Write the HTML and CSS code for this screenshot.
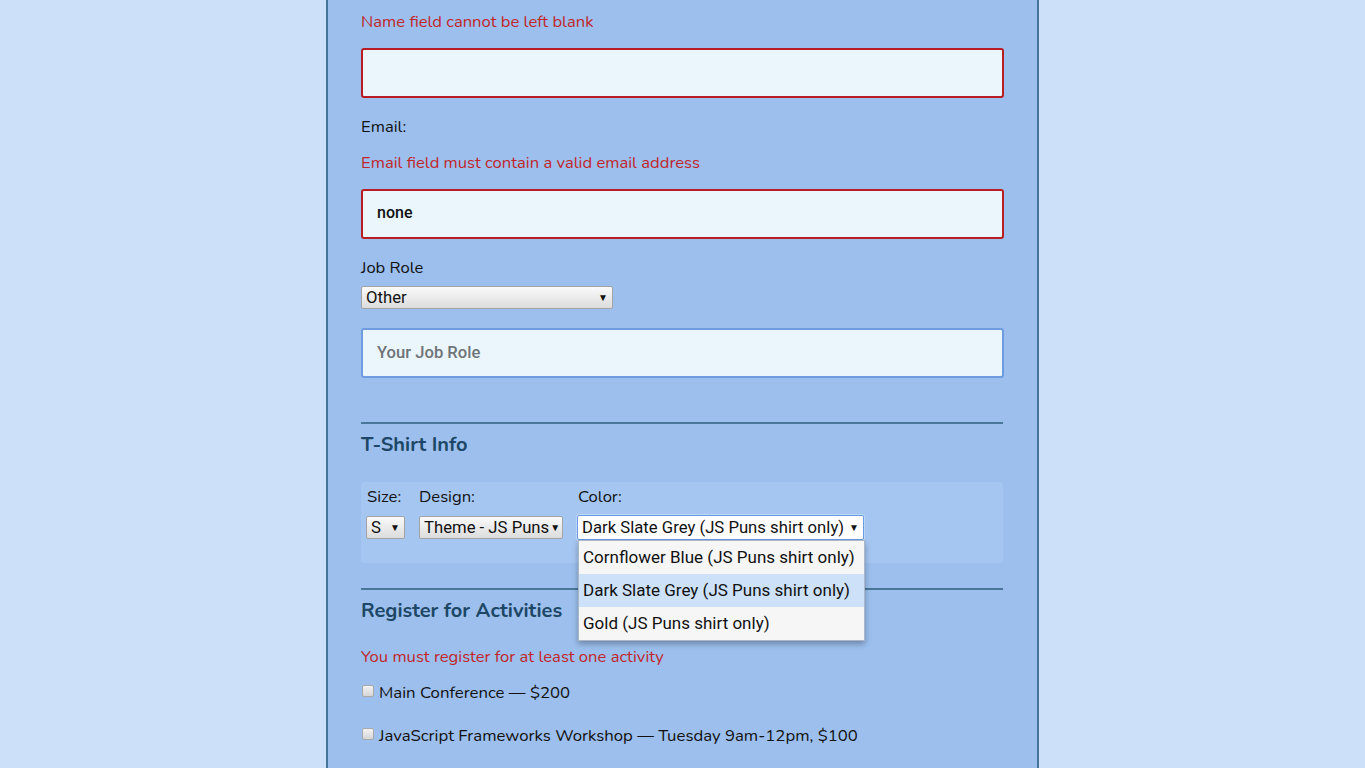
FILE: index.html
```html
<!DOCTYPE html>
<html>
<head>
<meta charset="utf-8">
<link rel="stylesheet" href="styles.css">
</head>
<body>
<div class="page">
  <form class="container">
    <p class="error first">Name field cannot be left blank</p>
    <div class="input invalid"></div>
    <p class="label">Email:</p>
    <p class="error">Email field must contain a valid email address</p>
    <div class="input invalid filled">none</div>
    <p class="label job">Job Role</p>
    <div class="select job-select"><span>Other</span><span class="arrow">▼</span></div>
    <div class="input other placeholder">Your Job Role</div>

    <hr class="rule first-rule">
    <h2 class="legend">T-Shirt Info</h2>
    <div class="shirt">
      <div class="col size-col">
        <span class="small-label">Size:</span>
        <div class="select size-select"><span>S</span><span class="arrow">▼</span></div>
      </div>
      <div class="col design-col">
        <span class="small-label">Design:</span>
        <div class="select design-select"><span>Theme - JS Puns</span><span class="arrow">▼</span></div>
      </div>
      <div class="col color-col">
        <span class="small-label">Color:</span>
        <div class="select color-select focused"><span>Dark Slate Grey (JS Puns shirt only)</span><span class="arrow">▼</span>
          <ul class="popup">
            <li>Cornflower Blue (JS Puns shirt only)</li>
            <li class="hover">Dark Slate Grey (JS Puns shirt only)</li>
            <li>Gold (JS Puns shirt only)</li>
          </ul>
        </div>
      </div>
    </div>

    <hr class="rule second-rule">
    <h2 class="legend">Register for Activities</h2>
    <p class="error act-error">You must register for at least one activity</p>
    <label class="activity"><span class="box"></span>Main Conference — $200</label>
    <label class="activity second"><span class="box"></span>JavaScript Frameworks Workshop — Tuesday 9am-12pm, $100</label>
  </form>
</div>
</body>
</html>
```

FILE: styles.css
```css
html, body {
  margin: 0;
  padding: 0;
  height: 100%;
  background: #cce0f9;
  overflow: hidden;
}
.page {
  display: flex;
  justify-content: center;
  height: 100%;
}
.container {
  width: 642px;
  padding: 0 34px 0 33px;
  background: #9cbfed;
  border-left: 2px solid #46759b;
  border-right: 2px solid #46759b;
  font-family: "Nunito", "Lato", sans-serif;
  font-size: 16.6px;
  color: #111;
}
p { margin: 0; line-height: 24px; }
.error { color: #c1262b; }
.error.first { padding-top: 10px; }
.input {
  box-sizing: border-box;
  height: 50px;
  width: 643px;
  margin-top: 14px;
  border: 2px solid #6f9ce0;
  border-radius: 3px;
  background: #eaf6fb;
  font-family: Roboto, sans-serif;
  font-size: 16px;
  padding: 0 14px 3px;
  display: flex;
  align-items: center;
  font-weight: 500;
}
.input.invalid { border-color: #b71d22; }
.input.filled { color: #111; }
.input.placeholder { color: #6f7478; font-weight: 500; font-size: 16.6px; padding-bottom: 1px; }
.input.other { margin-top: 19px; }
.label { margin-top: 17px; }
.label + .error { margin-top: 12px; }
.label.job { margin-top: 17px; }

.select {
  box-sizing: border-box;
  position: relative;
  display: flex;
  align-items: center;
  justify-content: space-between;
  height: 23px;
  border: 1px solid #a3a3a3;
  border-radius: 2px;
  background: linear-gradient(#fafafa, #dcdcdc);
  font-family: Roboto, sans-serif;
  font-size: 16.7px;
  color: #111;
  padding: 0 4px 0 4px;
  white-space: nowrap;
}
.arrow { font-size: 10px; margin-left: 1px; }
.job-select { width: 252px; margin-top: 6px; }

.rule {
  margin: 44px 0 0;
  border: 0;
  height: 2px;
  background: #4a7699;
}
.legend {
  margin: 7px 0 0;
  font-size: 20px;
  line-height: 28px;
  font-weight: 700;
  color: #1d4766;
}
.shirt {
  margin-top: 23px;
  height: 81px;
  box-sizing: border-box;
  background: #a5c6f1;
  border-radius: 4px;
  padding: 3px 5px 0;
  display: flex;
  gap: 14px;
}
.col { display: flex; flex-direction: column; }
.small-label { line-height: 24px; padding-left: 1px; }
.design-col .small-label { padding-left: 0; }
.col .select { margin-top: 7px; }
.size-select { width: 39px; }
.design-select { width: 144px; padding-right: 2px; }
.color-select {
  width: 287px;
  height: 25px;
  margin-top: 6px !important;
  border: 1px solid #6a9be4;
  background: #fff;
  box-shadow: 0 0 0 1px #bcd6f8;
}
.popup {
  position: absolute;
  left: 0;
  top: 24px;
  width: 285px;
  margin: 0;
  padding: 0;
  list-style: none;
  background: #f6f6f6;
  border: 1px solid #a9b7c9;
  box-shadow: 0 3px 6px rgba(0, 0, 0, 0.3);
  z-index: 2;
}
.popup li {
  height: 33px;
  line-height: 33px;
  padding-left: 4px;
  font-size: 17px;
  color: #111;
}
.popup li.hover { background: #cde1f8; }
.second-rule { margin-top: 25px; }
.legend + .error.act-error { margin-top: 20px; }
.activity {
  display: flex;
  align-items: center;
  margin-top: 12px;
  line-height: 24px;
  font-size: 16.75px;
}
.activity.second { margin-top: 19px; }
.box {
  display: inline-block;
  width: 10px;
  height: 10px;
  border: 1px solid #a9a9a9;
  border-radius: 2px;
  background: linear-gradient(#f2f2f2, #d6d6d6);
  margin: -5px 5px 0 1px;
}
```
